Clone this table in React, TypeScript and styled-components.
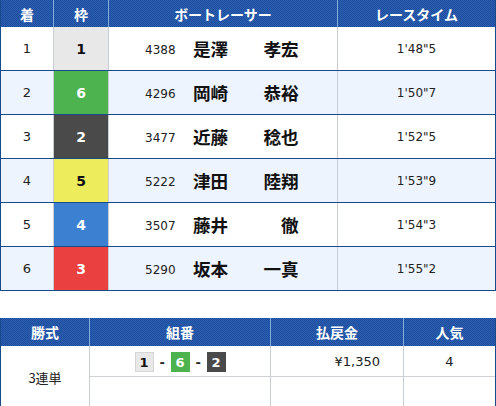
import { Fragment } from "react";
import styled, { createGlobalStyle } from "styled-components";

type Racer = {
  rank: number;
  frame: number;
  regNo: string;
  name: string;
  time: string;
};

const racers: Racer[] = [
  { rank: 1, frame: 1, regNo: "4388", name: "是澤　　孝宏", time: "1'48\"5" },
  { rank: 2, frame: 6, regNo: "4296", name: "岡崎　　恭裕", time: "1'50\"7" },
  { rank: 3, frame: 2, regNo: "3477", name: "近藤　　稔也", time: "1'52\"5" },
  { rank: 4, frame: 5, regNo: "5222", name: "津田　　陸翔", time: "1'53\"9" },
  { rank: 5, frame: 4, regNo: "3507", name: "藤井　　　徹", time: "1'54\"3" },
  { rank: 6, frame: 3, regNo: "5290", name: "坂本　　一真", time: "1'55\"2" },
];

const frameColors: Record<number, { bg: string; fg: string }> = {
  1: { bg: "#e8e8e8", fg: "#111" },
  2: { bg: "#4a4a4a", fg: "#fff" },
  3: { bg: "#ea4040", fg: "#fff" },
  4: { bg: "#3c80d2", fg: "#fff" },
  5: { bg: "#ecec5c", fg: "#111" },
  6: { bg: "#4db34f", fg: "#fff" },
};

const GlobalStyle = createGlobalStyle`
  html, body {
    margin: 0;
    padding: 0;
    background: #fff;
    overflow: hidden;
  }
  body {
    font-family: "Noto Sans CJK JP", "DejaVu Sans", sans-serif;
    color: #222;
  }
`;

const Page = styled.div`
  width: 496px;
`;

const Table = styled.div<{ $cols: string }>`
  box-sizing: border-box;
  width: 496px;
  border-left: 1px solid #174a8b;
  border-right: 1px solid #174a8b;
  --cols: ${(p) => p.$cols};
`;

const HeadRow = styled.div<{ $h: number }>`
  display: grid;
  grid-template-columns: var(--cols);
  height: ${(p) => p.$h}px;
  background: repeating-conic-gradient(#1d4c9c 0 25%, #2c60b2 0 50%) 0 0 / 2px 2px;
`;

const HeadCell = styled.div<{ $first?: boolean }>`
  display: flex;
  align-items: center;
  justify-content: center;
  border-left: ${(p) => (p.$first ? "none" : "1px solid #86aadd")};
  color: #fff;
  font-weight: bold;
  font-size: 14px;
`;

const Row = styled.div<{ $alt: boolean }>`
  display: grid;
  grid-template-columns: var(--cols);
  height: 44px;
  box-sizing: border-box;
  border-bottom: 1px solid #174a8b;
  background: ${(p) => (p.$alt ? "#eef4fd" : "#fff")};
`;

const Cell = styled.div<{ $first?: boolean }>`
  display: flex;
  align-items: center;
  justify-content: center;
  border-left: ${(p) => (p.$first ? "none" : "1px solid #c8ccd3")};
  font-family: "DejaVu Sans", sans-serif;
  font-size: 13px;
`;

const FrameCell = styled(Cell)<{ $bg: string; $fg: string }>`
  background: ${(p) => p.$bg};
  color: ${(p) => p.$fg};
  font-weight: bold;
  font-size: 14px;
`;

const RacerCell = styled(Cell)`
  justify-content: flex-start;
  padding-left: 36px;
`;

const RegNo = styled.span`
  font-size: 12px;
  width: 30px;
  margin-top: 3px;
`;

const Name = styled.span`
  margin-left: 18px;
  font-family: "Noto Sans CJK JP", sans-serif;
  font-weight: bold;
  font-size: 17.6px;
  white-space: pre;
  color: #111;
`;

const TimeCell = styled(Cell)`
  font-size: 12px;
`;

const PayoutTable = styled(Table)`
  margin-top: 27px;
`;

const PayBody = styled.div`
  display: grid;
  grid-template-columns: var(--cols);
  grid-template-rows: 31px 30px;
`;

const PayCell = styled.div<{ $first?: boolean; $line?: boolean; $align?: string }>`
  display: flex;
  align-items: center;
  justify-content: ${(p) => p.$align ?? "center"};
  padding-right: ${(p) => (p.$align === "flex-end" ? "23px" : "0")};
  border-left: ${(p) => (p.$first ? "none" : "1px solid #c8ccd3")};
  border-bottom: ${(p) => (p.$line ? "1px solid #cfd2d6" : "none")};
  font-size: 13px;
  font-family: "DejaVu Sans", "Noto Sans CJK JP", sans-serif;
`;

const KindCell = styled(PayCell)`
  grid-row: span 2;
  font-family: "Noto Sans CJK JP", sans-serif;
  padding-top: 2px;
`;

const Combo = styled.div`
  display: flex;
  align-items: center;
  gap: 6px;
  margin-top: 2px;
`;

const Badge = styled.span<{ $bg: string; $fg: string }>`
  display: inline-flex;
  align-items: center;
  justify-content: center;
  width: 19px;
  height: 20px;
  box-sizing: border-box;
  background: ${(p) => p.$bg};
  color: ${(p) => p.$fg};
  border: 1px solid ${(p) => (p.$bg === "#e8e8e8" ? "#d6d6d6" : p.$bg)};
  font-weight: bold;
  font-size: 13px;
  font-family: "DejaVu Sans", sans-serif;
`;

const Dash = styled.span`
  font-weight: bold;
  font-size: 13px;
  width: 5px;
  text-align: center;
`;

const raceCols = "52px 55px 229px 1fr";
const payCols = "88px 181px 133px 1fr";

const App: React.FC = () => {
  const combo = [1, 6, 2];
  return (
    <Page>
      <GlobalStyle />
      <Table $cols={raceCols}>
        <HeadRow $h={27}>
          <HeadCell $first>着</HeadCell>
          <HeadCell>枠</HeadCell>
          <HeadCell>ボートレーサー</HeadCell>
          <HeadCell>レースタイム</HeadCell>
        </HeadRow>
        {racers.map((r, i) => (
          <Row key={r.rank} $alt={i % 2 === 1}>
            <Cell $first>{r.rank}</Cell>
            <FrameCell $bg={frameColors[r.frame].bg} $fg={frameColors[r.frame].fg}>
              {r.frame}
            </FrameCell>
            <RacerCell>
              <RegNo>{r.regNo}</RegNo>
              <Name>{r.name}</Name>
            </RacerCell>
            <TimeCell>{r.time}</TimeCell>
          </Row>
        ))}
      </Table>

      <PayoutTable $cols={payCols}>
        <HeadRow $h={28}>
          <HeadCell $first>勝式</HeadCell>
          <HeadCell>組番</HeadCell>
          <HeadCell>払戻金</HeadCell>
          <HeadCell>人気</HeadCell>
        </HeadRow>
        <PayBody>
          <KindCell $first>3連単</KindCell>
          <PayCell $line>
            <Combo>
              {combo.map((n, i) => (
                <Fragment key={n}>
                  {i > 0 && <Dash>-</Dash>}
                  <Badge $bg={frameColors[n].bg} $fg={frameColors[n].fg}>
                    {n}
                  </Badge>
                </Fragment>
              ))}
            </Combo>
          </PayCell>
          <PayCell $line $align="flex-end">¥1,350</PayCell>
          <PayCell $line>4</PayCell>
          <PayCell />
          <PayCell />
          <PayCell />
        </PayBody>
      </PayoutTable>
    </Page>
  );
};

export default App;
